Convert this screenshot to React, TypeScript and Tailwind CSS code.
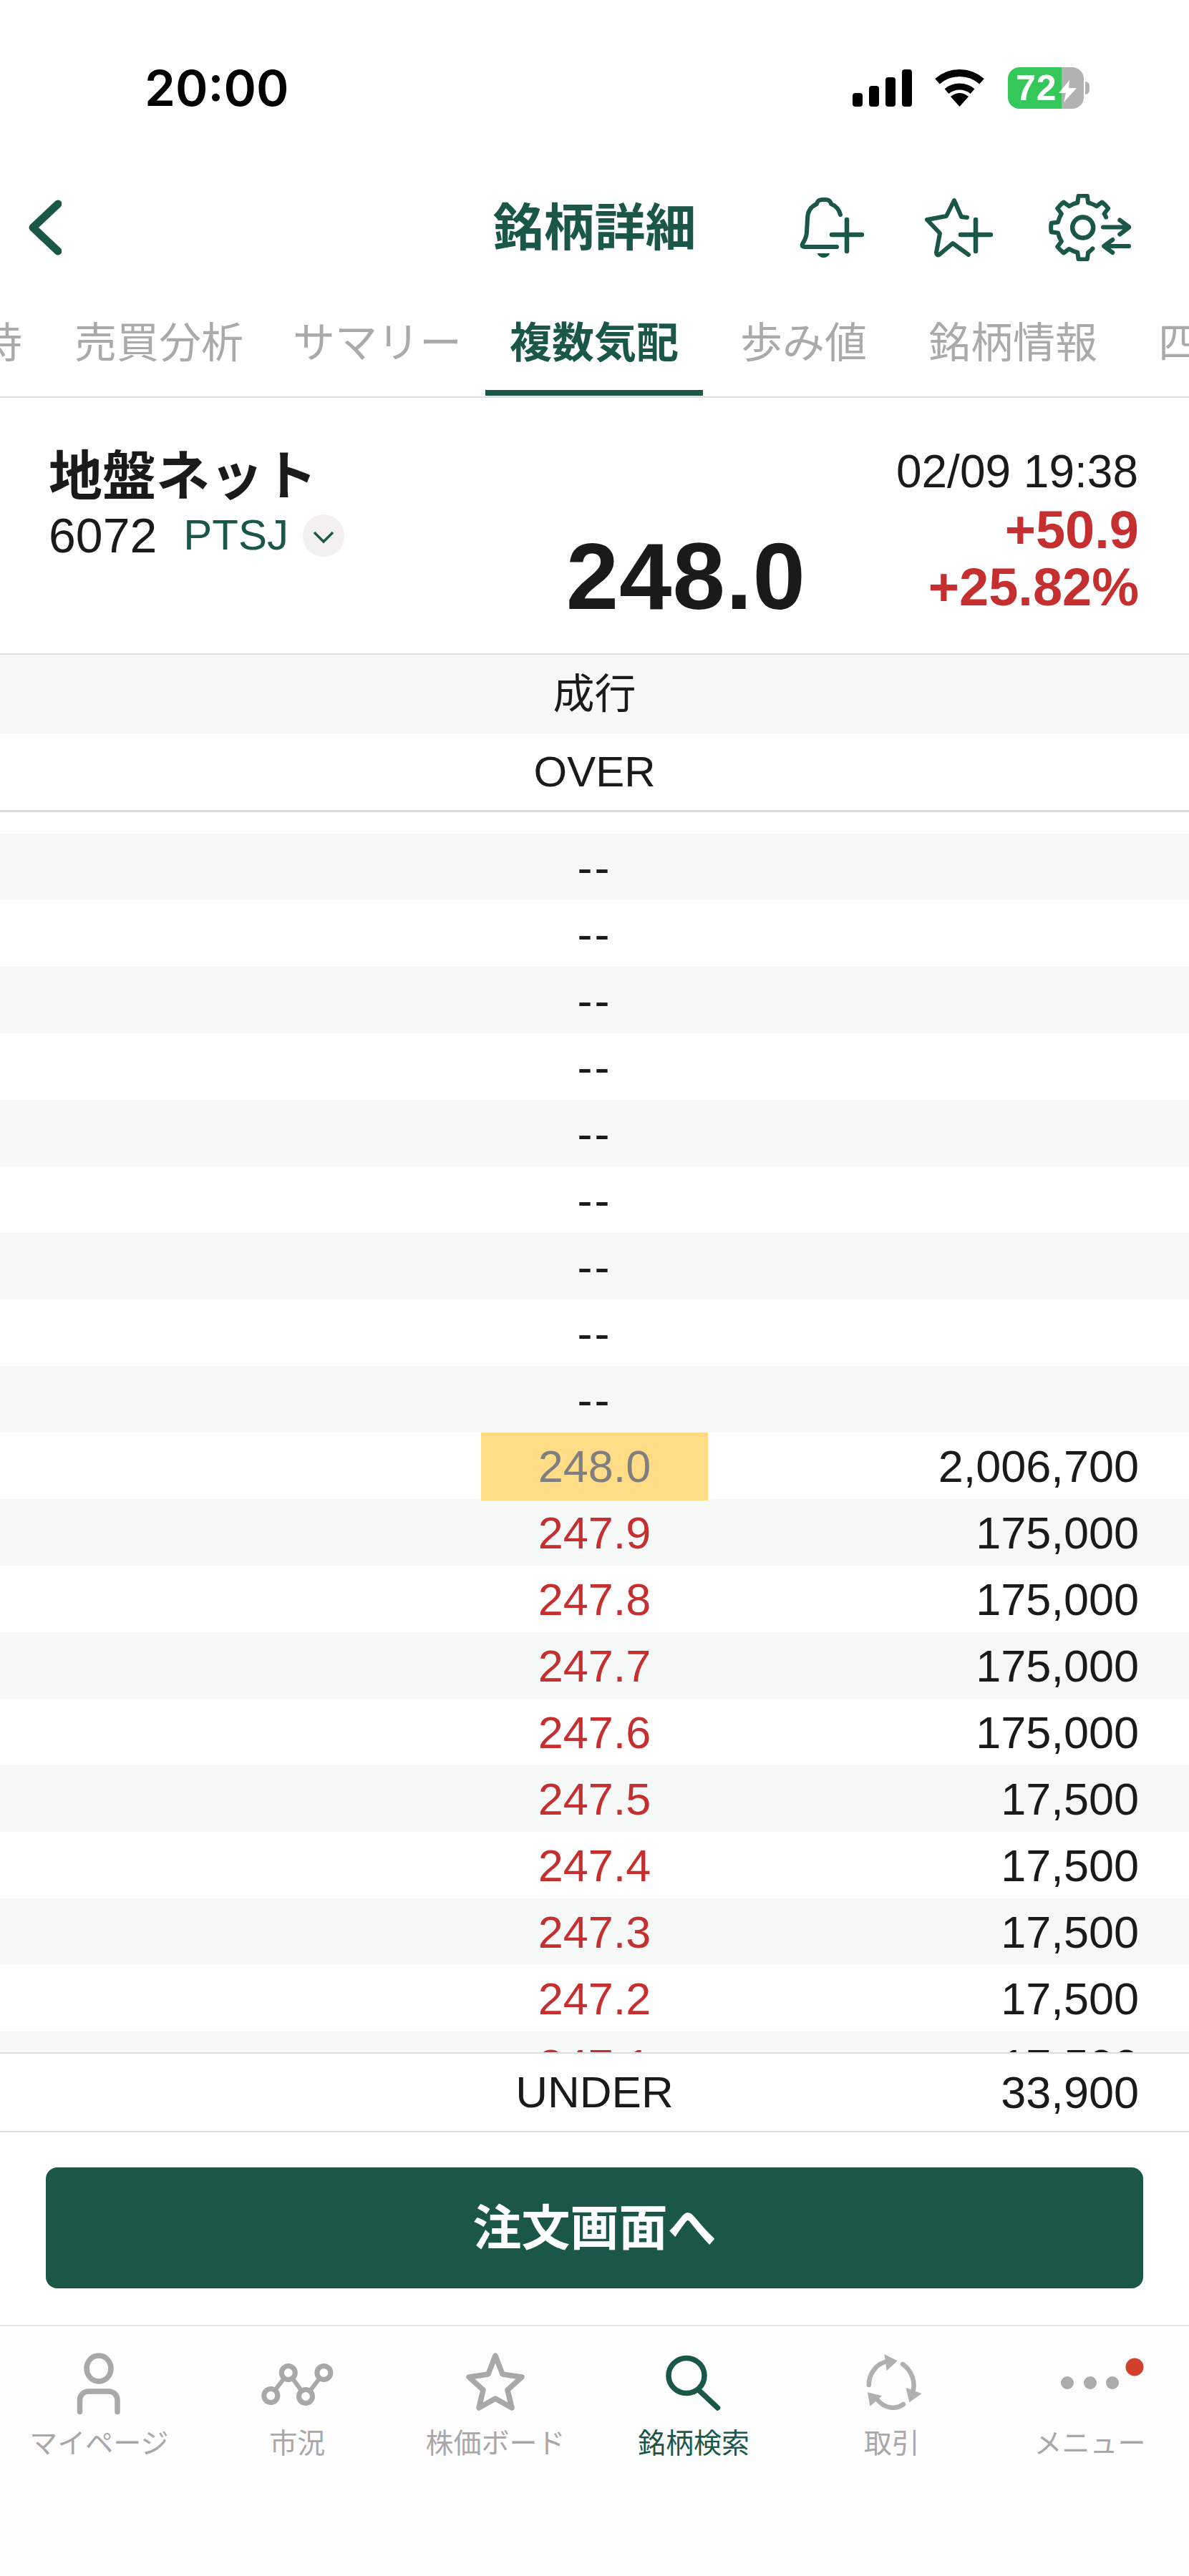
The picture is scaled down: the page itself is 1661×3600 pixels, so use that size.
import React from "react";

const GREEN = "#1a5749";

function gearPath() {
  const cx = 47.7, cy = 47, root = 35.5, tip = 44.5;
  const pt = (r: number, deg: number) => {
    const a = (deg * Math.PI) / 180;
    return `${(cx + r * Math.cos(a)).toFixed(1)} ${(cy + r * Math.sin(a)).toFixed(1)}`;
  };
  const teeth = [-45, -90, -135, -180, -225, -270];
  let d = `M${pt(root, -24)}`;
  for (const s of teeth) {
    d += ` A${root} ${root} 0 0 0 ${pt(root, s + 12)} L${pt(tip, s + 8)} A${tip} ${tip} 0 0 0 ${pt(tip, s - 8)} L${pt(root, s - 12)}`;
  }
  d += ` A${root} ${root} 0 0 0 ${pt(root - 3, -295)}`;
  return d;
}

function Bell() {
  return (
    <svg viewBox="0 0 90 85" className="w-[90px] h-[85px]" fill="none" stroke={GREEN} strokeWidth="6" strokeLinecap="round" strokeLinejoin="round">
      <path d="M57 24C55 16 49 11 44 9C43 4 40 3 34 3C28 3 25 4 24 9C15 13 11 20 11 30L10 48C10 56 6 61 4 65C3 68 4 69 7 69H52" />
      <path d="M25 78H42C41 82 37 84 33.5 84C30 84 26 82 25 78Z" fill={GREEN} stroke="none" />
      <path d="M45 52H87M66 31V75" strokeWidth="6.5" />
    </svg>
  );
}

function StarPlus() {
  return (
    <svg viewBox="0 0 96 85" className="w-[96px] h-[85px]" fill="none" stroke={GREEN} strokeWidth="6" strokeLinecap="round" strokeLinejoin="round">
      <path d="M60 28L52 27L42 4L31 26L4 31L22 50L17 77C17 80 19 81 21 80L40 64L62 80" />
      <path d="M51 52H93M72 31V75" strokeWidth="6.5" />
    </svg>
  );
}

function GearArrows() {
  return (
    <svg viewBox="0 0 115 94" className="w-[115px] h-[94px]" fill="none" stroke={GREEN} strokeWidth="6" strokeLinecap="round" strokeLinejoin="round">
      <path d={gearPath()} />
      <circle cx="47.700" cy="47" r="14.500" strokeWidth="6.500" />
      <path d="M76 46.500H112M99.300 36.500L112.500 46.500L99.300 56.500" />
      <path d="M112 73H78M89.300 64L77 73L89.300 82" />
    </svg>
  );
}

function Wifi() {
  return (
    <svg viewBox="0 0 71 52" className="w-[71px] h-[52px] ml-[31px]" fill="none" stroke="#000">
      <path d="M4.500 16.700A47 47 0 0 1 66.500 16.700" strokeWidth="10" />
      <path d="M17.500 30.600A28 28 0 0 1 53.500 30.600" strokeWidth="9" />
      <path d="M35.500 52L23 38Q35.500 28 48 38Z" fill="#000" stroke="none" />
    </svg>
  );
}

function Battery() {
  return (
    <div className="flex items-center ml-[32px]">
      <div className="relative flex w-[106px] h-[58px] rounded-[16px] overflow-hidden">
        <div className="w-[75px] bg-[#34c759] flex items-center pl-[11px] text-white font-bold text-[50px] leading-none tracking-[1px]">72</div>
        <div className="flex-1 bg-[#b2b2b2]"></div>
        <svg viewBox="0 0 25 31" className="absolute left-[71px] top-[18px] w-[25px] h-[31px]">
          <path d="M15 0L0 18H10L7 31L25 11H14Z" fill="#fff" />
        </svg>
      </div>
      <div className="w-[6px] h-[18px] ml-[2px] rounded-r-full bg-[#b2b2b2]"></div>
    </div>
  );
}

function Signal() {
  return (
    <div className="flex items-end gap-[9px] h-[52px]">
      <div className="w-[14px] h-[19px] rounded-[4px] bg-black"></div>
      <div className="w-[14px] h-[29px] rounded-[4px] bg-black"></div>
      <div className="w-[14px] h-[41px] rounded-[4px] bg-black"></div>
      <div className="w-[14px] h-[52px] rounded-[4px] bg-black"></div>
    </div>
  );
}

const GREY = "#a8a8a8";

function NavPerson() {
  return (
    <svg viewBox="0 0 140 100" className="w-[140px] h-[100px]" fill="none" stroke={GREY} strokeWidth="7.500" strokeLinecap="round">
      <ellipse cx="70" cy="30" rx="17" ry="18" />
      <path d="M43.500 90.500V74A12 12 0 0 1 55.500 62H84A12 12 0 0 1 96 74V90.500" />
    </svg>
  );
}

function NavChart() {
  return (
    <svg viewBox="0 0 140 100" className="w-[140px] h-[100px]" fill="#fdfdfd" stroke={GREY} strokeWidth="7">
      <path d="M33.300 68L57.800 36L82 69L107.400 36" fill="none" strokeWidth="6" />
      <circle cx="33.300" cy="68" r="9.500" />
      <circle cx="57.800" cy="36" r="9.500" />
      <circle cx="82" cy="69" r="9.500" />
      <circle cx="107.400" cy="36" r="9.500" />
    </svg>
  );
}

function NavStar() {
  return (
    <svg viewBox="0 0 140 100" className="w-[140px] h-[100px]" fill="none" stroke={GREY} strokeWidth="7.500" strokeLinejoin="round">
      <path d="M70 12L80 38L107 42L87 60L93 85L70 72L47 85L53 60L33 42L60 38Z" />
    </svg>
  );
}

function NavSearch() {
  return (
    <svg viewBox="0 0 140 100" className="w-[140px] h-[100px]" fill="none" stroke={GREEN} strokeWidth="7.500" strokeLinecap="round">
      <ellipse cx="60" cy="40" rx="25" ry="24.500" />
      <path d="M79 62L103.500 85" />
    </svg>
  );
}

function NavCycle() {
  return (
    <svg viewBox="0 0 140 100" className="w-[140px] h-[100px]" fill="none" stroke="#b0b0b0" strokeWidth="6.500" strokeLinecap="round">
      <path d="M37.700 53C38 38 47 25 60 21" />
      <path d="M59.400 10L77.700 19.300L62.700 33.300Z" fill="#b0b0b0" stroke="none" />
      <path d="M85 24C97 32 105 50 98 66" />
      <path d="M89.400 56.700L111.700 65L94.400 77.300Z" fill="#b0b0b0" stroke="none" />
      <path d="M86 80C75 88 60 86 50 74" />
      <path d="M36 63.300L56 68.300L39.400 82.700Z" fill="#b0b0b0" stroke="none" />
    </svg>
  );
}

function NavMenu() {
  return (
    <svg viewBox="0 0 150 100" className="w-[150px] h-[100px]">
      <circle cx="43" cy="50" r="9" fill="#ababab" />
      <circle cx="75" cy="50" r="9" fill="#ababab" />
      <circle cx="106" cy="50" r="9" fill="#ababab" />
      <circle cx="137" cy="28" r="12.500" fill="#d2402b" />
    </svg>
  );
}

const NAV: { label: string; icon: React.ReactNode; active?: boolean }[] = [
  { label: "マイページ", icon: <NavPerson /> },
  { label: "市況", icon: <NavChart /> },
  { label: "株価ボード", icon: <NavStar /> },
  { label: "銘柄検索", icon: <NavSearch />, active: true },
  { label: "取引", icon: <NavCycle /> },
  { label: "メニュー", icon: <NavMenu /> },
];

const ROWS: { price: string; qty: string; kind: "dash" | "last" | "bid" }[] = [
  ...Array.from({ length: 9 }, () => ({ price: "--", qty: "", kind: "dash" as const })),
  { price: "248.0", qty: "2,006,700", kind: "last" },
  { price: "247.9", qty: "175,000", kind: "bid" },
  { price: "247.8", qty: "175,000", kind: "bid" },
  { price: "247.7", qty: "175,000", kind: "bid" },
  { price: "247.6", qty: "175,000", kind: "bid" },
  { price: "247.5", qty: "17,500", kind: "bid" },
  { price: "247.4", qty: "17,500", kind: "bid" },
  { price: "247.3", qty: "17,500", kind: "bid" },
  { price: "247.2", qty: "17,500", kind: "bid" },
  { price: "247.1", qty: "17,500", kind: "bid" },
];

export default function App() {
  return (
    <div className="w-[1661px] h-[3600px] overflow-hidden bg-white text-[#1a1a1a] font-['Liberation_Sans','Noto_Sans_CJK_JP',sans-serif]">
      {/* status bar */}
      <div className="h-[246px] flex items-center pl-[202px] pr-[139px]">
        <div className="font-['Inter',sans-serif] font-semibold text-[69px] leading-none text-black">20:00</div>
        <div className="ml-auto flex items-center">
          <Signal />
          <Wifi />
          <Battery />
        </div>
      </div>

      {/* nav */}
      <div className="h-[144px] grid grid-cols-[1fr_284px_1fr] items-center">
        <div className="pl-[40px]">
          <svg viewBox="0 0 46 78" className="w-[46px] h-[78px]" fill="none" stroke={GREEN} strokeWidth="11" strokeLinecap="round" strokeLinejoin="round">
            <path d="M41 6L6 39L41 72" />
          </svg>
        </div>
        <div className="text-center text-[71px] leading-none font-bold text-[#1a5749] whitespace-nowrap">銘柄詳細</div>
        <div className="flex items-center pl-[144px]">
          <Bell />
          <div className="ml-[84px]"><StarPlus /></div>
          <div className="ml-[78px]"><GearArrows /></div>
        </div>
      </div>

      {/* tabs */}
      <div className="h-[166px] border-b-2 border-[#dddddd] flex items-start overflow-hidden text-[59px] leading-[72px] text-[#aaaaaa] whitespace-nowrap">
        <div className="shrink-0 -ml-[205px] pt-[54px]">株主優待</div>
        <div className="shrink-0 ml-[73px] pt-[54px]">売買分析</div>
        <div className="shrink-0 ml-[69px] pt-[54px]">サマリー</div>
        <div className="shrink-0 ml-[33px] pl-[34px] pr-[34px] pt-[54px] h-[163px] border-b-8 border-[#1a5749] font-bold text-[#1a5749]">複数気配</div>
        <div className="shrink-0 ml-[52px] pt-[54px]">歩み値</div>
        <div className="shrink-0 ml-[86px] pt-[54px]">銘柄情報</div>
        <div className="shrink-0 ml-[85px] pt-[54px]">四季報</div>
      </div>

      {/* stock summary */}
      <div className="h-[359px] border-b-2 border-[#dddddd] flex pl-[68px] pr-[70px]">
        <div className="flex-1 pt-[70px]">
          <div className="text-[75px] leading-[80px] font-bold">地盤ネット</div>
          <div className="mt-[12px] h-[60px] flex items-center text-[68px] leading-none">
            <span>6072</span>
            <span className="ml-[37px] text-[60px] text-[#1a5749]">PTSJ</span>
            <span className="ml-[20px] w-[58px] h-[59px] rounded-full bg-[#f2f0f0] shrink-0">
              <svg viewBox="0 0 58 59" className="w-[58px] h-[59px]" fill="none" stroke={GREEN} strokeWidth="3.500">
                <path d="M16 25L29 38L42 25" />
              </svg>
            </span>
          </div>
        </div>
        <div className="self-end mb-[47px] mr-[124px] text-[132px] leading-[120px] font-bold tracking-[1px]">248.0</div>
        <div className="w-[341px] pt-[68px] text-right">
          <div className="text-[64px] leading-[70px] mr-[1px]">02/09 19:38</div>
          <div className="mt-[7px] text-[74px] leading-[80px] font-bold text-[#c62f2f]">+50.9</div>
          <div className="text-[74px] leading-[80px] font-bold text-[#c62f2f]">+25.82%</div>
        </div>
      </div>

      {/* fixed price rows */}
      <div className="h-[110px] bg-[#f7f9f9] flex items-center justify-center text-[58px] leading-none">成行</div>
      <div className="h-[107px] flex items-center justify-center text-[60px] leading-none">OVER</div>
      <div className="h-[3px] bg-[#dcdcdc]"></div>

      {/* order book */}
      <div className="h-[1733px] overflow-hidden pt-[30px]">
        {ROWS.map((r, i) => (
          <div key={i} className={`h-[93px] grid grid-cols-[672px_317px_1fr] text-[63px] leading-[95px] ${i % 2 === 0 ? "bg-[#f7f9f9]" : "bg-white"}`}>
            <div></div>
            <div
              className={`text-center ${
                r.kind === "last"
                  ? "bg-[#ffdc85] text-[#7f7f7f]"
                  : r.kind === "bid"
                  ? "text-[#c62f2f]"
                  : "tracking-[3px]"
              }`}
            >
              {r.price}
            </div>
            <div className="text-right pr-[70px]">{r.qty}</div>
          </div>
        ))}
      </div>

      {/* under */}
      <div className="h-[112px] border-y-2 border-[#dddddd] grid grid-cols-[672px_317px_1fr] items-center text-[62px] leading-none">
        <div></div>
        <div className="text-center">UNDER</div>
        <div className="text-right pr-[70px] text-[63px]">33,900</div>
      </div>

      {/* button */}
      <div className="mt-[49px] mx-[64px] h-[169px] rounded-[16px] bg-[#1a5749] flex items-center justify-center text-white text-[68px] leading-none font-bold">
        注文画面へ
      </div>

      {/* tab bar */}
      <div className="mt-[51px] h-[351px] border-t-2 border-[#e6e6e6] bg-[#fdfdfd] grid grid-cols-6 content-start pt-[29px]">
        {NAV.map((n) => (
          <div key={n.label} className="flex flex-col items-center">
            {n.icon}
            <div className={`mt-[15px] text-[39px] leading-[40px] whitespace-nowrap ${n.active ? "text-[#1a5749]" : "text-[#a8a8a8]"}`}>{n.label}</div>
          </div>
        ))}
      </div>
    </div>
  );
}
